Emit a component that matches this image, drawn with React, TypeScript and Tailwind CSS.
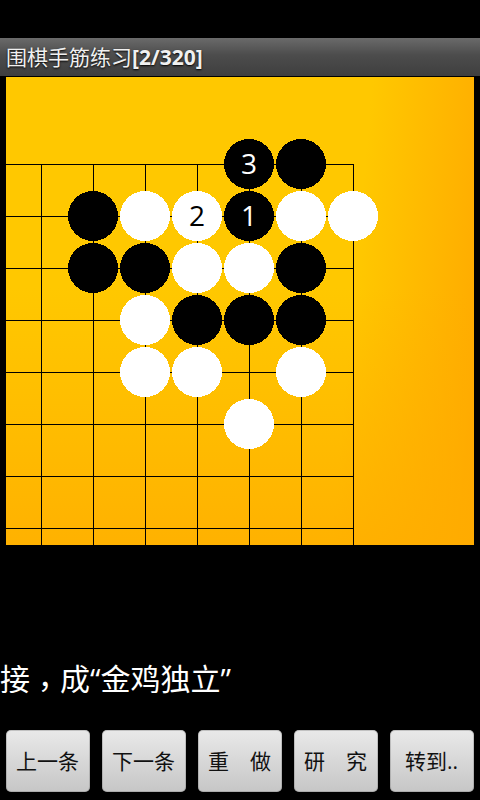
const LINES_X = [41, 93, 145, 197, 249, 301, 353];
const LINES_Y = [164, 216, 268, 320, 372, 424, 476, 528];

// page coordinates of the stones: [x, y, colour, move number]
const STONES: [number, number, "b" | "w", string?][] = [
  [249, 164, "b", "3"],
  [301, 164, "b"],
  [93, 216, "b"],
  [145, 216, "w"],
  [197, 216, "w", "2"],
  [249, 216, "b", "1"],
  [301, 216, "w"],
  [353, 216, "w"],
  [93, 268, "b"],
  [145, 268, "b"],
  [197, 268, "w"],
  [249, 268, "w"],
  [301, 268, "b"],
  [145, 320, "w"],
  [197, 320, "b"],
  [249, 320, "b"],
  [301, 320, "b"],
  [145, 372, "w"],
  [197, 372, "w"],
  [301, 372, "w"],
  [249, 424, "w"],
];

const BUTTONS = ["上一条", "下一条", "重　做", "研　究", "转到.."];

function Board() {
  return (
    <div className="mx-[6px] h-[468px] bg-[linear-gradient(95deg,#ffc800_0%,#ffc800_72%,#ffa800_100%)]">
      <div className="h-full w-full bg-[linear-gradient(180deg,rgba(255,172,0,0)_0%,rgba(255,172,0,0)_45%,rgba(255,172,0,0.8)_100%)]">
        <svg width="468" height="468" viewBox="6 77 468 468" className="block">
          {LINES_Y.map((y) => (
            <rect key={y} x={6} y={y} width={348} height={1} fill="#000" shapeRendering="crispEdges" />
          ))}
          {LINES_X.map((x) => (
            <rect key={x} x={x} y={164} width={1} height={381} fill="#000" shapeRendering="crispEdges" />
          ))}
          {STONES.map(([x, y, color, label]) => (
            <g key={`${x}-${y}`}>
              <circle cx={x} cy={y} r={25} fill={color === "b" ? "#000" : "#fff"} shapeRendering="crispEdges" />
              {label && (
                <text
                  x={x}
                  y={y + 10}
                  textAnchor="middle"
                  fill={color === "b" ? "#fff" : "#000"}
                  className="font-['Open_Sans',sans-serif] text-[28px] font-normal"
                >
                  {label}
                </text>
              )}
            </g>
          ))}
        </svg>
      </div>
    </div>
  );
}

export default function App() {
  return (
    <div className="flex h-[800px] w-[480px] flex-col overflow-hidden bg-black font-['Open_Sans','Noto_Sans_CJK_SC',sans-serif]">
      <div className="h-[38px] shrink-0" />
      <div className="flex h-[38px] shrink-0 items-center bg-[linear-gradient(180deg,#6a6a6a_0%,#4c4c4c_45%,#3f3f3f_100%)] px-[6px] text-[21px] leading-none text-[#f0f0f0] [text-shadow:0_1px_2px_#000]">
        围棋手筋练习<span className="font-bold">[2/320]</span>
      </div>
      <div className="h-px shrink-0" />
      <Board />
      <div className="flex h-[185px] shrink-0 items-end pb-[31px] text-[30px] leading-[40px] text-white">
        <p>
          接<span className="inline-block translate-y-[7px] font-['Noto_Sans_CJK_TC',sans-serif]">，</span>成“金鸡独立”
        </p>
      </div>
      <div className="flex gap-3 px-[6px]">
        {BUTTONS.map((label) => (
          <button
            key={label}
            type="button"
            className="flex h-[62px] w-[84px] items-center justify-center rounded-[5px] bg-[linear-gradient(180deg,#e9e9e9_0%,#c6c6c6_100%)] pr-px text-[21px] leading-none text-[#111] shadow-[inset_0_0_0_1px_rgba(120,120,120,0.35)]"
          >
            {label}
          </button>
        ))}
      </div>
    </div>
  );
}
